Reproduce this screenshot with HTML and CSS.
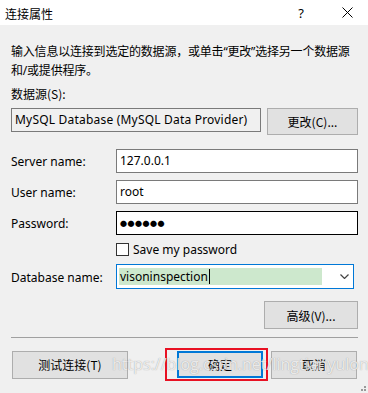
FILE: index.html
```html
<!DOCTYPE html>
<html lang="zh-CN">
<head>
    <meta charset="UTF-8">
    <title>连接属性</title>
    <link rel="stylesheet" href="styles.css">
</head>
<body>
    <div class="dialog">
        <div class="titlebar">
            <span class="title">连接属性</span>
            <span class="help">?</span>
            <svg class="close" width="11" height="11" viewBox="0 0 11 11">
                <path d="M0.5 0.5 L10.5 10.5 M10.5 0.5 L0.5 10.5" stroke="#000" stroke-width="1"/>
            </svg>
        </div>

        <div class="content">
            <p class="desc">输入信息以连接到选定的数据源，或单击“更改”选择另一个数据源和/或提供程序。</p>
            <div class="label-top">数据源(S):</div>

            <div class="source-row">
                <div class="source-box">MySQL Database (MySQL Data Provider)</div>
                <button class="btn btn-change">更改(C)...</button>
            </div>

            <div class="form">
                <label>Server name:</label>
                <div class="input">127.0.0.1</div>

                <label>User name:</label>
                <div class="input">root</div>

                <label>Password:</label>
                <div class="input input-dark"><span class="dots">●●●●●●</span></div>

                <span></span>
                <div class="check-row">
                    <span class="checkbox"></span>
                    <span>Save my password</span>
                </div>

                <label>Database name:</label>
                <div class="combo">
                    <span class="combo-sel">visoninspection<span class="caret"></span></span>
                    <svg class="chevron" width="9" height="5" viewBox="0 0 9 5">
                        <path d="M0.5 0.5 L4.5 4.5 L8.5 0.5" stroke="#444" stroke-width="1.2" fill="none"/>
                    </svg>
                </div>
            </div>

            <div class="advanced-row">
                <button class="btn btn-advanced">高级(V)...</button>
            </div>

            <div class="separator"></div>

            <div class="footer">
                <button class="btn btn-test">测试连接(T)</button>
                <div class="ok-mark">
                    <button class="btn btn-ok">确定</button>
                </div>
                <button class="btn btn-cancel">取消</button>
            </div>
        </div>

        <div class="watermark">https://blog.csdn.net/lingtianyulong</div>
        <div class="grip">
            <i></i><i></i><i></i>
        </div>
    </div>
</body>
</html>
```

FILE: styles.css
```css
body {
    margin: 0;
    background: #f0f0f0;
    font-family: "Noto Sans", "Noto Sans CJK SC", sans-serif;
    font-size: 12px;
    color: #000;
}

.dialog {
    position: relative;
    width: 368px;
    height: 393px;
    overflow: hidden;
}

.titlebar {
    height: 25px;
    background: #fff;
    display: flex;
    align-items: center;
    padding-left: 5px;
}

.title {
    flex: 1;
    font-family: "Noto Sans CJK SC", sans-serif;
    font-size: 12px;
    margin-top: 1px;
}

.help {
    font-size: 13px;
    margin-right: 38px;
}

.close {
    margin-right: 15px;
}

.content {
    padding: 0 10px 0 11px;
}

/* Latin font first so the quotes stay narrow */
.desc {
    margin: 17px 0 0 0;
    line-height: 19px;
    font-family: "Noto Sans", "Noto Sans CJK SC", sans-serif;
    font-size: 12px;
    letter-spacing: -0.2px;
}

.label-top {
    margin-top: 4px;
    line-height: 19px;
    font-family: "Noto Sans CJK SC", sans-serif;
}

.source-row {
    display: flex;
    align-items: flex-start;
    gap: 6px;
    margin-top: 5px;
}

.source-box {
    width: 250px;
    height: 24px;
    box-sizing: border-box;
    border: 1px solid #7a7a7a;
    background: #f0f0f0;
    padding-left: 3px;
    line-height: 22px;
    white-space: nowrap;
    overflow: hidden;
    letter-spacing: 0.2px;
}

.btn {
    font-family: "Noto Sans CJK SC", sans-serif;
    font-size: 12px;
    color: #000;
    background: #e1e1e1;
    border: 1px solid #adadad;
    box-sizing: border-box;
    padding: 0;
    margin: 0;
}

.btn-change {
    width: 91px;
    height: 27px;
}

.form {
    display: grid;
    grid-template-columns: 105px 1fr;
    row-gap: 7px;
    align-items: center;
    margin-top: 14px;
}

.form label {
    line-height: 20px;
    padding-top: 2px;
}

.input {
    height: 24px;
    box-sizing: border-box;
    border: 1px solid #7a7a7a;
    background: #fff;
    padding-left: 3px;
    line-height: 22px;
}

.input-dark {
    border-color: #000;
}

.dots {
    font-size: 7px;
    letter-spacing: 0.5px;
    vertical-align: 1px;
}

.check-row {
    display: flex;
    align-items: center;
    gap: 4px;
    height: 16px;
    margin-top: -1px;
}

.checkbox {
    width: 13px;
    height: 13px;
    box-sizing: border-box;
    border: 1px solid #333;
    background: #fff;
}

.combo {
    width: 238px;
    height: 25px;
    box-sizing: border-box;
    border: 1px solid #0078d7;
    background: #fff;
    display: flex;
    align-items: center;
    padding: 0 4px 0 2px;
}

.combo-sel {
    flex: 1;
    height: 17px;
    line-height: 17px;
    background: #cde8cd;
    margin-right: 18px;
    padding-left: 1px;
    display: flex;
    align-items: center;
}

.caret {
    display: inline-block;
    width: 1px;
    height: 15px;
    background: #000;
    margin-left: 1px;
}

.advanced-row {
    display: flex;
    justify-content: flex-end;
    margin-top: 12px;
}

.btn-advanced {
    width: 94px;
    height: 28px;
}

.separator {
    height: 1px;
    background: #a0a0a0;
    margin-top: 8px;
}

.footer {
    display: flex;
    align-items: center;
    margin-top: 10px;
}

.btn-test {
    width: 116px;
    height: 28px;
    margin-left: 1px;
}

.ok-mark {
    margin-left: 37px;
    width: 103px;
    height: 33px;
    box-sizing: border-box;
    border: 2px solid #e81123;
    padding: 1px 0 0 10px;
    display: flex;
    align-items: flex-start;
}

.btn-ok {
    width: 86px;
    height: 27px;
    border: 2px solid #0078d7;
}

.btn-cancel {
    width: 86px;
    height: 28px;
    margin-left: 3px;
}

.watermark {
    position: absolute;
    left: 112px;
    top: 353px;
    font-family: "Open Sans", sans-serif;
    font-size: 16px;
    color: rgba(255, 255, 255, 0.8);
    text-shadow: 0 0 1px rgba(110, 110, 110, 0.7);
    white-space: nowrap;
}

.grip {
    position: absolute;
    right: 2px;
    bottom: 2px;
    width: 7px;
    height: 7px;
}

.grip i {
    position: absolute;
    width: 2px;
    height: 2px;
    background: #999;
}

.grip i:nth-child(1) { right: 0; bottom: 0; }
.grip i:nth-child(2) { right: 3px; bottom: 0; }
.grip i:nth-child(3) { right: 0; bottom: 3px; }
```
